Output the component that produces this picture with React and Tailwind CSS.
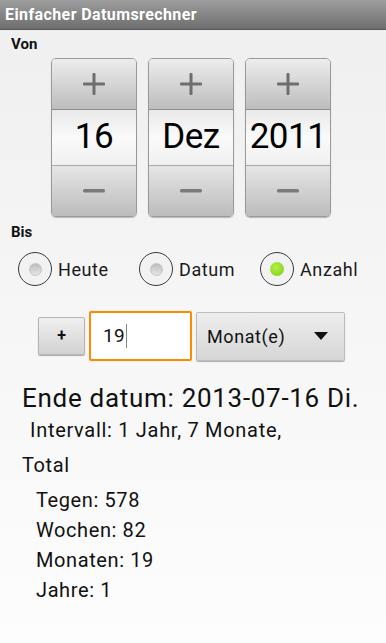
import React from 'react';

const font = { fontFamily: 'Roboto, "Noto Sans", sans-serif' };

const Picker = ({ value }) => (
  <div className="flex flex-col w-[86px] h-[159px] rounded-[5px] border border-[#9a9a9a] overflow-hidden shadow-[0_1px_1px_rgba(0,0,0,0.25)]">
    <div className="h-[51px] flex items-center justify-center bg-gradient-to-b from-[#ededed] to-[#bdbdbd] border-b border-[#8c8c8c]">
      <svg width="24" height="24" viewBox="0 0 24 24">
        <rect x="10.5" y="1" width="3" height="22" rx="1" fill="#6e6e6e" />
        <rect x="1" y="10.5" width="22" height="3" rx="1" fill="#6e6e6e" />
      </svg>
    </div>
    <div className="h-[56px] flex items-center justify-center bg-gradient-to-b from-[#e9e9e9] via-[#fafafa] to-[#f0f0f0] text-[35px] tracking-[-0.5px] text-black border-b border-[#a8a8a8]">
      {value}
    </div>
    <div className="flex-1 flex items-center justify-center bg-gradient-to-b from-[#e6e6e6] to-[#bcbcbc]">
      <svg width="24" height="6" viewBox="0 0 24 6">
        <rect x="1" y="1" width="22" height="3.5" rx="1.5" fill="#7a7a7a" />
      </svg>
    </div>
  </div>
);

const Radio = ({ label, checked }) => (
  <div className="w-[121px] flex items-center gap-[6px]">
    <div className="w-[34px] h-[34px] rounded-full border-[1.5px] border-[#3a3a3a] flex items-center justify-center bg-[#f2f2f2]">
      {checked ? (
        <div className="w-[14px] h-[14px] rounded-full bg-[radial-gradient(circle_at_40%_35%,#b6f04a,#7ccc10)]" />
      ) : (
        <div className="w-[13px] h-[13px] rounded-full bg-gradient-to-b from-[#bdbdbd] to-[#e6e6e6] border border-[#c4c4c4]" />
      )}
    </div>
    <span className="text-[18px] tracking-[0.6px] text-[#1a1a1a]">{label}</span>
  </div>
);

export default function App() {
  return (
    <div style={font} className="w-[386px] h-[643px] flex flex-col bg-gradient-to-b from-[#efefef] to-[#fdfdfd] overflow-hidden">
      <div className="h-[30px] flex items-center px-[5px] bg-gradient-to-b from-[#9e9e9e] to-[#6e6e6e] border-b border-[#5a5a5a]">
        <span className="text-white font-bold text-[16px] tracking-[0.4px]">Einfacher Datumsrechner</span>
      </div>

      <div className="pl-[11px] pt-[3px] text-[15px] font-bold text-[#111]">Von</div>
      <div className="flex gap-[11px] pl-[51px] pt-[2px]">
        <Picker value="16" />
        <Picker value="Dez" />
        <Picker value="2011" />
      </div>

      <div className="pl-[11px] pt-[4px] text-[15px] font-bold text-[#111]">Bis</div>
      <div className="flex pl-[18px] pt-[9px]">
        <Radio label="Heute" />
        <Radio label="Datum" />
        <Radio label="Anzahl" checked />
      </div>

      <div className="flex items-center pl-[38px] pt-[25px] gap-[4px]">
        <div className="w-[47px] h-[38px] flex items-center justify-center text-[16px] font-bold text-[#111] rounded-[2px] border border-[#b4b4b4] bg-gradient-to-b from-[#f0f0f0] to-[#d2d2d2] shadow-[0_1px_1px_rgba(0,0,0,0.3)]">
          +
        </div>
        <div className="w-[103px] h-[50px] flex items-center pl-[12px] bg-white border-2 border-[#ff8a00] rounded-[2px] text-[19px] tracking-[0.4px] text-[#111]">
          19<span className="w-px h-[24px] bg-[#888] ml-[1px]" />
        </div>
        <div className="w-[149px] h-[49px] flex items-center justify-between pl-[10px] pr-[16px] rounded-[2px] border border-[#bdbdbd] bg-gradient-to-b from-[#eeeeee] to-[#d6d6d6] shadow-[0_1px_1px_rgba(0,0,0,0.3)] text-[18px] tracking-[0.6px] text-[#111]">
          <span>Monat(e)</span>
          <svg width="14" height="8" viewBox="0 0 14 8">
            <polygon points="0,0 14,0 7,8" fill="#111" />
          </svg>
        </div>
      </div>

      <div className="pl-[22px] pt-[21px] text-[26px] tracking-[0.7px] text-[#111] leading-[32px]">Ende datum: 2013-07-16 Di.</div>
      <div className="pl-[30px] pt-[3px] text-[20px] tracking-[0.7px] text-[#111] leading-[26px]">Intervall: 1 Jahr, 7 Monate,</div>
      <div className="pl-[22px] pt-[9px] text-[20px] tracking-[0.6px] text-[#111] leading-[26px]">Total</div>
      <div className="pl-[36px] pt-[7px] flex flex-col text-[20px] tracking-[0.6px] text-[#111] leading-[30px]">
        <span>Tegen: 578</span>
        <span>Wochen: 82</span>
        <span>Monaten: 19</span>
        <span>Jahre: 1</span>
      </div>
    </div>
  );
}
